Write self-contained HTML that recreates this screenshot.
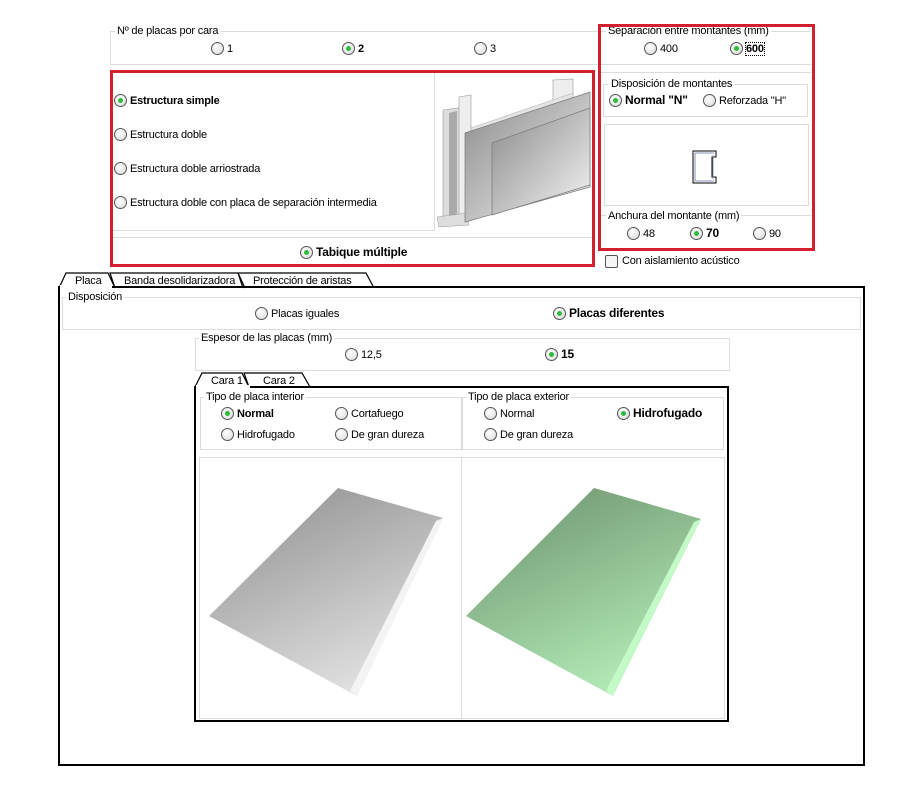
<!DOCTYPE html>
<html><head><meta charset="utf-8"><style>
body{margin:0;width:901px;height:806px;background:#fff;position:relative;overflow:hidden;font-family:"Liberation Sans",sans-serif;font-size:11px;color:#000;letter-spacing:-0.2px}
.a{position:absolute}
.g{position:absolute;border:1px solid #dcdcdc;box-sizing:border-box}
.lg{position:absolute;background:#fff;padding:0 2px;line-height:12px;white-space:nowrap}
.r{position:absolute;white-space:nowrap;line-height:13px;height:13px}
.r i{display:inline-block;width:11px;height:11px;border:1px solid #555;border-radius:50%;background:radial-gradient(circle at 40% 35%,#fff,#d8d8d8);vertical-align:-3px;margin-right:3px;position:relative}
.r.on i:after{content:"";position:absolute;left:3px;top:3px;width:5px;height:5px;border-radius:50%;background:#2dbb3a}
.r.on{font-weight:bold}
.red{position:absolute;border:3px solid #d2202e;box-sizing:border-box}
.blk{position:absolute;border:2px solid #000;box-sizing:border-box}
.tab{position:absolute;line-height:14px;white-space:nowrap}
</style></head><body>

<div class="g" style="left:110px;top:31px;width:700px;height:34px;border-right:none"></div>
<div class="lg" style="left:115px;top:25px">Nº de placas por cara</div>
<div class="r" style="left:211px;top:42px"><i></i>1</div>
<div class="r on" style="left:342px;top:42px"><i></i>2</div>
<div class="r" style="left:474px;top:42px"><i></i>3</div>

<div class="a" style="left:110px;top:70px;width:485px;height:197px;background:#fff"></div>
<div class="g" style="left:112px;top:72px;width:323px;height:159px;border-left:none;border-top:none"></div>
<div class="a" style="left:112px;top:237px;width:480px;height:1px;background:#dcdcdc"></div>
<div class="red" style="left:110px;top:70px;width:485px;height:197px"></div>
<div class="r on" style="left:114px;top:94px"><i></i>Estructura simple</div>
<div class="r" style="left:114px;top:128px"><i></i>Estructura doble</div>
<div class="r" style="left:114px;top:162px"><i></i>Estructura doble arriostrada</div>
<div class="r" style="left:114px;top:196px"><i></i>Estructura doble con placa de separación intermedia</div>
<div class="r on" style="left:300px;top:246px;font-size:12px"><i></i>Tabique múltiple</div>
<svg class="a" style="left:437px;top:75px" width="156" height="155">
<defs><linearGradient id="pg" x1="0" y1="0" x2="1" y2="1"><stop offset="0" stop-color="#8a8a8a"/><stop offset="1" stop-color="#f4f4f4"/></linearGradient></defs>
<polygon points="116,5 136,4 136,50 116,55" fill="#eee" stroke="#999" stroke-width=".6"/>
<polygon points="28,55 136,18 136,26 28,63" fill="#e4e4e4" stroke="#aaa" stroke-width=".5"/>
<polygon points="6,35 28,32 28,148 6,148" fill="#ddd" stroke="#999" stroke-width=".6"/>
<polygon points="12,38 20,36 20,140 12,142" fill="#aaa"/>
<polygon points="22,22 34,20 34,145 22,148" fill="#eee" stroke="#999" stroke-width=".6"/>
<polygon points="0,142 30,138 32,150 2,152" fill="#ddd" stroke="#999" stroke-width=".5"/>
<polygon points="28,58 153,17 153,112 28,147" fill="url(#pg)" stroke="#777" stroke-width=".7"/>
<polygon points="55,68 153,33 153,110 55,140" fill="url(#pg)" stroke="#777" stroke-width=".7"/>
</svg>

<div class="a" style="left:601px;top:64px;width:210px;height:1px;background:#dcdcdc"></div>
<div class="a" style="left:601px;top:72px;width:210px;height:1px;background:#dcdcdc"></div>
<div class="lg" style="left:606px;top:25px">Separación entre montantes (mm)</div>
<div class="r" style="left:644px;top:42px"><i></i>400</div>
<div class="r on" style="left:730px;top:42px"><i></i><span style="outline:1px dotted #000">600</span></div>
<div class="g" style="left:603px;top:84px;width:205px;height:33px"></div>
<div class="lg" style="left:609px;top:78px">Disposición de montantes</div>
<div class="r on" style="left:609px;top:94px;font-size:12px"><i></i>Normal "N"</div>
<div class="r" style="left:703px;top:94px"><i></i>Reforzada "H"</div>
<div class="g" style="left:604px;top:124px;width:205px;height:82px"></div>
<svg class="a" style="left:690px;top:148px" width="32" height="38"><path d="M3,3 H26 V9 H22 V29 H26 V35 H3 Z" fill="#fff" stroke="#000" stroke-width="1"/><path d="M5,5 H24 M5,5 V33 H24 M23,7 V31" fill="none" stroke="#8890b0" stroke-width="1"/></svg>
<div class="a" style="left:601px;top:215px;width:210px;height:1px;background:#dcdcdc"></div>
<div class="lg" style="left:606px;top:210px">Anchura del montante (mm)</div>
<div class="r" style="left:627px;top:227px"><i></i>48</div>
<div class="r on" style="left:690px;top:227px;font-size:12px"><i></i>70</div>
<div class="r" style="left:753px;top:227px"><i></i>90</div>
<div class="red" style="left:598px;top:24px;width:217px;height:227px"></div>
<div class="a" style="left:605px;top:255px;width:11px;height:11px;border:1px solid #555;border-radius:2px;background:#f4f4f4"></div>
<div class="a" style="left:622px;top:255px;line-height:13px">Con aislamiento acústico</div>

<div class="blk" style="left:58px;top:286px;width:807px;height:480px"></div>
<svg class="a" style="left:58px;top:271px" width="320" height="18"><path d="M1,17 L8,2 H50 L57,17 M57,17 L52,2 H180 L187,17 M185,17 L180,2 H308 L316,17" fill="none" stroke="#000" stroke-width="1.2"/></svg>
<div class="a" style="left:60px;top:285px;width:52px;height:3px;background:#fff"></div>
<div class="tab" style="left:75px;top:274px">Placa</div>
<div class="tab" style="left:124px;top:274px">Banda desolidarizadora</div>
<div class="tab" style="left:253px;top:274px">Protección de aristas</div>

<div class="g" style="left:62px;top:297px;width:799px;height:33px"></div>
<div class="lg" style="left:66px;top:291px">Disposición</div>
<div class="r" style="left:255px;top:307px"><i></i>Placas iguales</div>
<div class="r on" style="left:553px;top:307px;font-size:12px"><i></i>Placas diferentes</div>

<div class="g" style="left:195px;top:338px;width:535px;height:33px"></div>
<div class="lg" style="left:199px;top:332px">Espesor de las placas (mm)</div>
<div class="r" style="left:345px;top:348px"><i></i>12,5</div>
<div class="r on" style="left:545px;top:348px;font-size:12px"><i></i>15</div>

<div class="blk" style="left:194px;top:386px;width:535px;height:336px"></div>
<svg class="a" style="left:194px;top:371px" width="125" height="17"><path d="M1,16 L8,2 H48 L55,16 M55,16 L50,2 H108 L116,16" fill="none" stroke="#000" stroke-width="1.2"/></svg>
<div class="a" style="left:196px;top:385px;width:54px;height:3px;background:#fff"></div>
<div class="tab" style="left:211px;top:374px">Cara 1</div>
<div class="tab" style="left:263px;top:374px">Cara 2</div>

<div class="g" style="left:200px;top:397px;width:262px;height:53px"></div>
<div class="lg" style="left:204px;top:391px">Tipo de placa interior</div>
<div class="r on" style="left:221px;top:407px"><i></i>Normal</div>
<div class="r" style="left:335px;top:407px"><i></i>Cortafuego</div>
<div class="r" style="left:221px;top:428px"><i></i>Hidrofugado</div>
<div class="r" style="left:335px;top:428px"><i></i>De gran dureza</div>
<div class="g" style="left:462px;top:397px;width:262px;height:53px"></div>
<div class="lg" style="left:466px;top:391px">Tipo de placa exterior</div>
<div class="r" style="left:484px;top:407px"><i></i>Normal</div>
<div class="r on" style="left:617px;top:407px;font-size:12px"><i></i>Hidrofugado</div>
<div class="r" style="left:484px;top:428px"><i></i>De gran dureza</div>

<div class="g" style="left:199px;top:457px;width:263px;height:262px"></div>
<div class="g" style="left:461px;top:457px;width:264px;height:262px"></div>
<svg class="a" style="left:195px;top:455px" width="535" height="270">
<defs>
<linearGradient id="gg" x1="0" y1="0" x2=".5" y2="1"><stop offset="0" stop-color="#8c8c8c"/><stop offset="1" stop-color="#dedede"/></linearGradient>
<linearGradient id="gn" x1="0" y1="0" x2=".5" y2="1"><stop offset="0" stop-color="#6b8f6b"/><stop offset="1" stop-color="#b0e8b4"/></linearGradient>
</defs>
<polygon points="143,33 248,63 162,241 14,161" fill="url(#gg)"/>
<polygon points="241,66 248,63 162,241 155,236" fill="#f4f4f4"/>
<polygon points="399,33 506,64 418,241 271,161" fill="url(#gn)"/>
<polygon points="499,67 506,64 418,241 411,236" fill="#c4fac8"/>
</svg>
</body></html>
